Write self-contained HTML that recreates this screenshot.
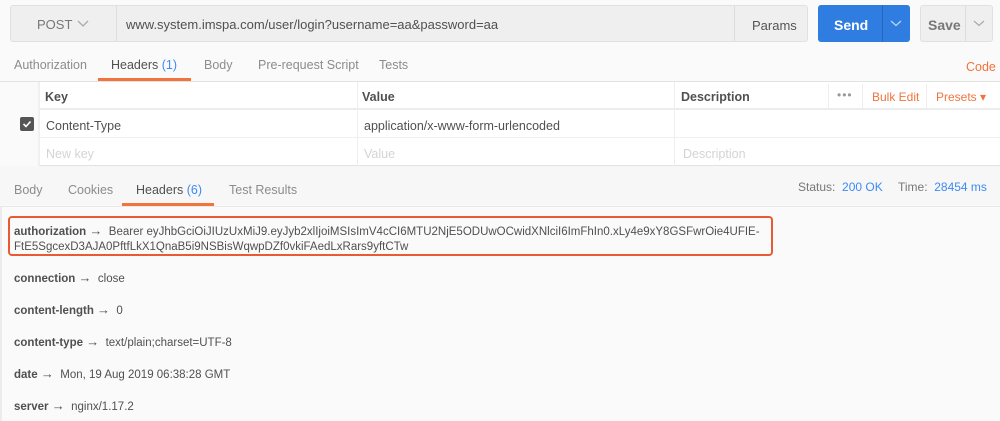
<!DOCTYPE html>
<html><head><style>
*{margin:0;padding:0;box-sizing:border-box}
body{width:1000px;height:421px;overflow:hidden;background:#fafafa;font-family:"Liberation Sans",sans-serif;font-size:12px;color:#505050;position:relative}
.a{position:absolute;white-space:nowrap}
.g{color:#8c8c8c}
.b{font-weight:bold;color:#505050}
.o{color:#f0743c}
.bl{color:#3d8af5}
.ar{font-size:13px;font-weight:bold;line-height:10px}
.h{font-size:11.5px;line-height:14px}
</style></head><body>
<div class="a" style="left:10px;top:5px;width:798px;height:37px;background:#efefef;border:1px solid #e0e0e0;border-radius:3px"></div>
<div class="a" style="left:116px;top:6px;width:1px;height:35px;background:#dcdcdc"></div>
<div class="a" style="left:734px;top:6px;width:1px;height:35px;background:#dcdcdc"></div>
<div class="a" style="left:37px;top:17px;font-size:13px;color:#777">POST</div>
<svg class="a" style="left:77px;top:20px" width="12" height="8"><path d="M1 1 L6 6 L11 1" stroke="#aaa" stroke-width="1.3" fill="none"/></svg>
<div class="a" style="left:126px;top:17px;font-size:13px;color:#505050">www.system.imspa.com/user/login?username=aa&amp;password=aa</div>
<div class="a" style="left:752px;top:18px;font-size:13px;color:#555">Params</div>
<div class="a" style="left:818px;top:5px;width:92px;height:37px;background:#2f7de1;border-radius:3px"></div>
<div class="a" style="left:882px;top:5px;width:1px;height:37px;background:#2a66b5"></div>
<div class="a" style="left:834px;top:17px;font-size:14px;font-weight:bold;color:#fff">Send</div>
<svg class="a" style="left:890px;top:20px" width="12" height="7"><path d="M1 1 L6 5.5 L11 1" stroke="#b9d3f5" stroke-width="1.3" fill="none"/></svg>
<div class="a" style="left:920px;top:5px;width:73px;height:37px;background:#efefef;border:1px solid #e0e0e0;border-radius:3px"></div>
<div class="a" style="left:965px;top:6px;width:1px;height:35px;background:#dcdcdc"></div>
<div class="a" style="left:928px;top:17px;font-size:14px;font-weight:bold;color:#777">Save</div>
<svg class="a" style="left:973px;top:20px" width="12" height="7"><path d="M1 1 L6 5.5 L11 1" stroke="#aaa" stroke-width="1.2" fill="none"/></svg>
<div class="a g" style="left:14px;top:58px;font-size:12.5px">Authorization</div>
<div class="a" style="left:111px;top:58px;font-size:12.5px;color:#505050">Headers <span class="bl">(1)</span></div>
<div class="a g" style="left:204px;top:58px;font-size:12.5px">Body</div>
<div class="a g" style="left:258px;top:58px;font-size:12.5px">Pre-request Script</div>
<div class="a g" style="left:379px;top:58px;font-size:12.5px">Tests</div>
<div class="a o" style="left:966px;top:60px;font-size:12.5px">Code</div>
<div class="a" style="left:98px;top:78px;width:93px;height:3px;background:#f0743c"></div>
<div class="a" style="left:0;top:81px;width:1000px;height:85px;background:#fff;border-top:1px solid #e2e2e2;border-bottom:1px solid #e2e2e2"></div>
<div class="a" style="left:0;top:82px;width:1000px;height:28px;background:#fff;border-bottom:2px solid #ececec"></div>
<div class="a" style="left:0;top:137px;width:1000px;height:1px;background:#f0f0f0"></div>
<div class="a" style="left:0;top:82px;width:38px;height:84px;background:#fafafa"></div>
<div class="a" style="left:38px;top:82px;width:2px;height:84px;background:#f0f0f0"></div>
<div class="a" style="left:357px;top:82px;width:1px;height:84px;background:#eee"></div>
<div class="a" style="left:674px;top:82px;width:1px;height:84px;background:#eee"></div>
<div class="a" style="left:828px;top:84px;width:1px;height:24px;background:#eee"></div>
<div class="a" style="left:862px;top:84px;width:1px;height:24px;background:#eee"></div>
<div class="a" style="left:926px;top:84px;width:1px;height:24px;background:#eee"></div>
<div class="a b" style="left:45px;top:90px;font-size:12.5px">Key</div>
<div class="a b" style="left:362px;top:90px;font-size:12.5px">Value</div>
<div class="a b" style="left:681px;top:90px;font-size:12.5px">Description</div>
<div class="a" style="left:837px;top:88px;font-size:12px;color:#999;letter-spacing:1px">•••</div>
<div class="a o" style="left:872px;top:90px;font-size:12px">Bulk Edit</div>
<div class="a o" style="left:936px;top:90px;font-size:12px">Presets ▾</div>
<div class="a" style="left:20px;top:117px;width:14px;height:14px;background:#555;border-radius:2px"></div>
<svg class="a" style="left:20px;top:117px" width="14" height="14"><path d="M3.5 7 L6 9.5 L10.5 4.5" stroke="#fff" stroke-width="1.6" fill="none"/></svg>
<div class="a" style="left:46px;top:119px;font-size:12.5px">Content-Type</div>
<div class="a" style="left:364px;top:119px;font-size:12.5px">application/x-www-form-urlencoded</div>
<div class="a" style="left:46px;top:147px;font-size:12.5px;color:#d4d4d4">New key</div>
<div class="a" style="left:364px;top:147px;font-size:12.5px;color:#d4d4d4">Value</div>
<div class="a" style="left:683px;top:147px;font-size:12.5px;color:#d4d4d4">Description</div>
<div class="a" style="left:0;top:166px;width:1000px;height:39px;background:#f7f7f7"></div>
<div class="a g" style="left:14px;top:183px;font-size:12.5px">Body</div>
<div class="a g" style="left:68px;top:183px;font-size:12.5px">Cookies</div>
<div class="a" style="left:136px;top:183px;font-size:12.5px;color:#505050">Headers <span class="bl">(6)</span></div>
<div class="a g" style="left:229px;top:183px;font-size:12.5px">Test Results</div>
<div class="a" style="left:122px;top:203px;width:92px;height:3px;background:#f0743c"></div>
<div class="a" style="left:0;top:206px;width:1000px;height:1px;background:#e8e8e8"></div>
<div class="a" style="left:798px;top:180px;font-size:12px;color:#777">Status: <span class="bl">&nbsp;200 OK</span></div>
<div class="a" style="left:898px;top:180px;font-size:12px;color:#777">Time: <span class="bl">&nbsp;28454 ms</span></div>
<div class="a" style="left:0;top:207px;width:2px;height:214px;background:#ececec"></div>
<div class="a" style="left:8px;top:216px;width:765px;height:40px;border:2px solid #ea5a32;border-radius:4px"></div>
<div class="a h" style="left:14px;top:225px;line-height:15px;color:#505050"><b>authorization <span class="ar">→</span></b>&nbsp; Bearer eyJhbGciOiJIUzUxMiJ9.eyJyb2xlIjoiMSIsImV4cCI6MTU2NjE5ODUwOCwidXNlciI6ImFhIn0.xLy4e9xY8GSFwrOie4UFIE-<br>FtE5SgcexD3AJA0PftfLkX1QnaB5i9NSBisWqwpDZf0vkiFAedLxRars9yftCTw</div>
<div class="a h" style="left:14px;top:272px"><b>connection <span class="ar">→</span></b>&nbsp; close</div>
<div class="a h" style="left:14px;top:304px"><b>content-length <span class="ar">→</span></b>&nbsp; 0</div>
<div class="a h" style="left:14px;top:336px"><b>content-type <span class="ar">→</span></b>&nbsp; text/plain;charset=UTF-8</div>
<div class="a h" style="left:14px;top:368px"><b>date <span class="ar">→</span></b>&nbsp; Mon, 19 Aug 2019 06:38:28 GMT</div>
<div class="a h" style="left:14px;top:400px"><b>server <span class="ar">→</span></b>&nbsp; nginx/1.17.2</div>
</body></html>
